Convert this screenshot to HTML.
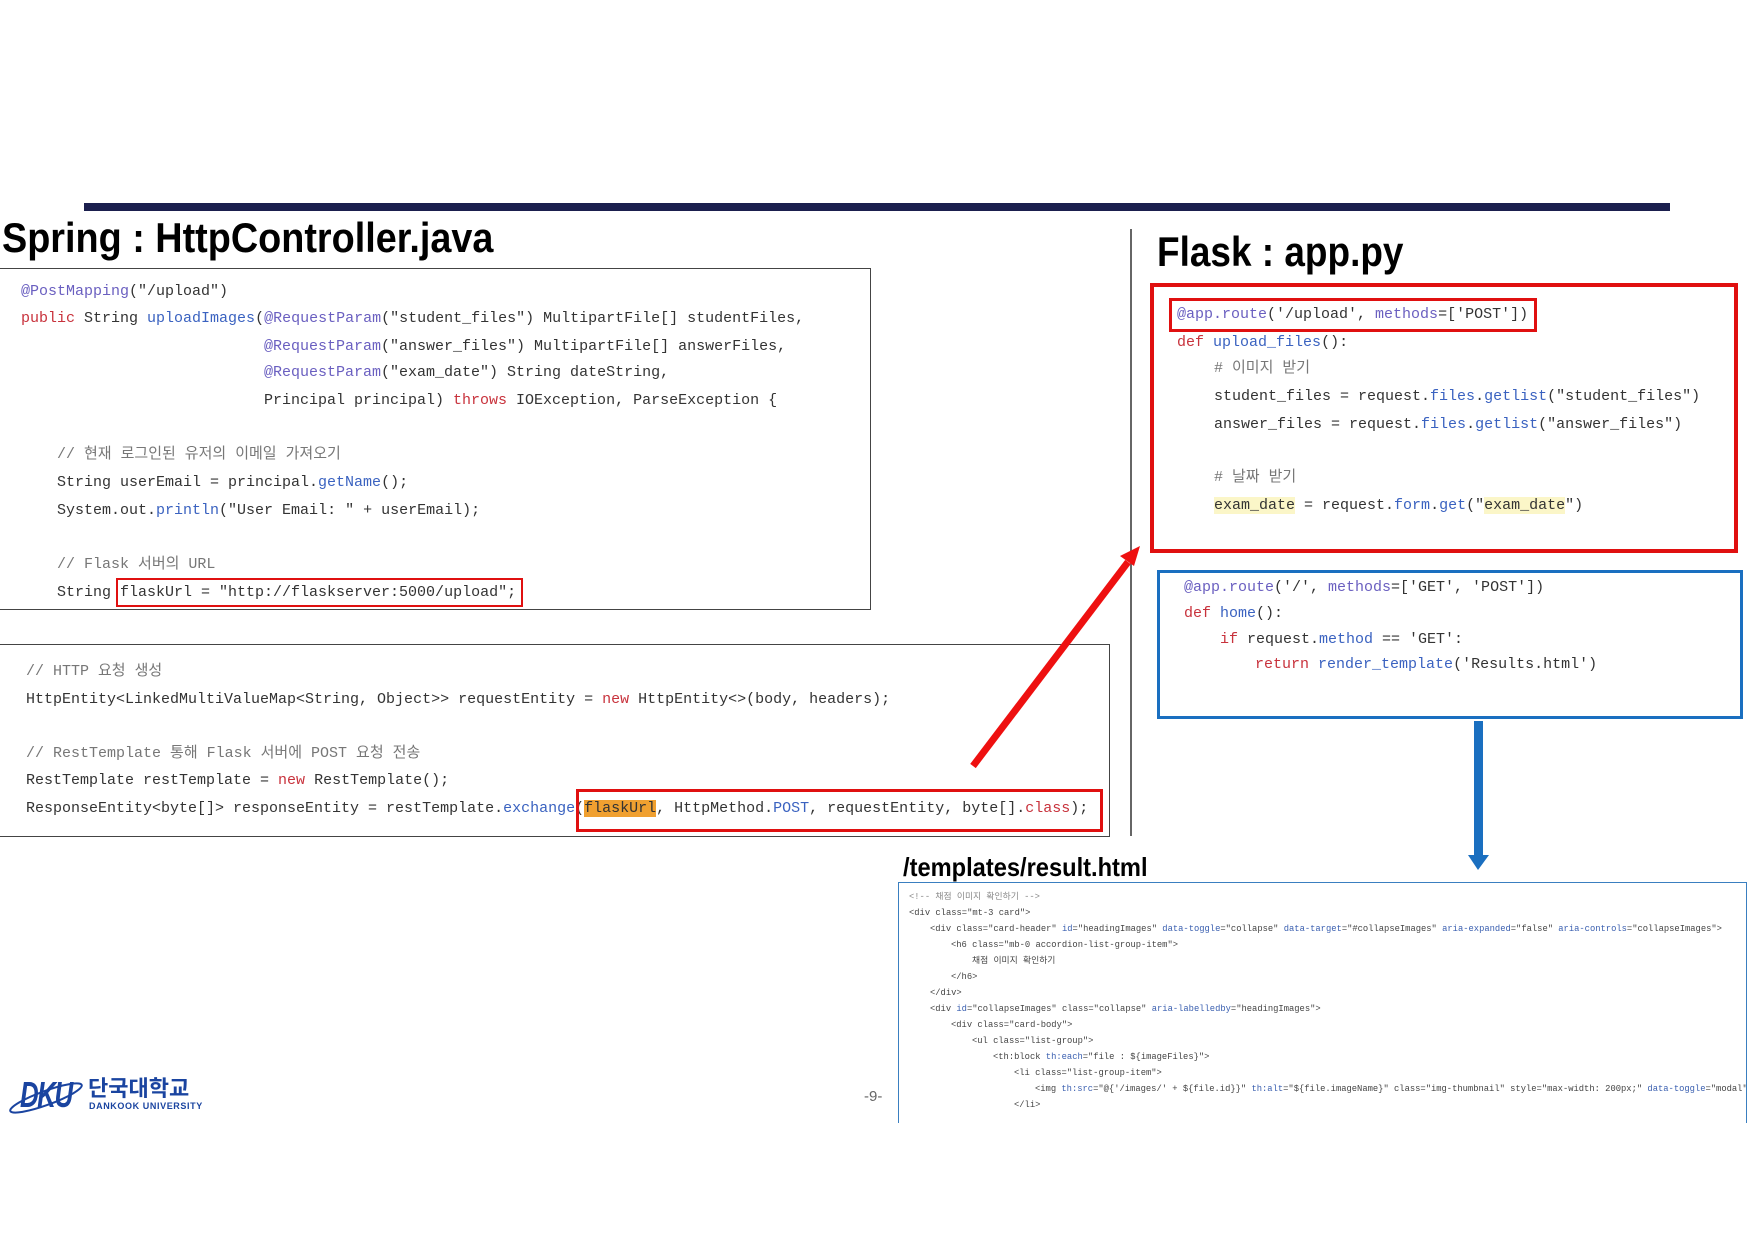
<!DOCTYPE html>
<html><head><meta charset="utf-8"><style>
body{margin:0;width:1753px;height:1240px;background:#fff;position:relative;overflow:hidden;font-family:"Liberation Sans","Noto Sans CJK KR",sans-serif}
.a{position:absolute}
.c{position:absolute;white-space:pre;font-family:"Liberation Mono","Noto Sans CJK KR",monospace;font-size:15px;color:#333;line-height:18px}
.t{position:absolute;font-family:"Liberation Sans Narrow","Liberation Sans","Noto Sans CJK KR",sans-serif;font-weight:bold;color:#000;white-space:nowrap;transform-origin:0 0}
.an{color:#6a5fc0}.kw{color:#c8323c}.fn{color:#3a62c0}.cm{color:#777}.st{color:#333}
.h .c{font-size:8.8px;line-height:12px;color:#444}
.h .tg{color:#555}.h .at{color:#3a5fb0}
</style></head><body>
<div class="a" style="left:84px;top:203px;width:1586px;height:8px;background:#1b1f4e"></div>

<div class="t" style="left:2px;top:214px;font-size:42px;transform:scaleX(0.9)">Spring : HttpController.java</div>
<div class="a" style="left:0;top:268px;width:870px;height:340px;border:1px solid #444;border-left:none"></div>
<div class="c" style="left:21px;top:283px"><span class="an">@PostMapping</span>("/upload")</div>
<div class="c" style="left:21px;top:310px"><span class="kw">public</span> String <span class="fn">uploadImages</span>(<span class="an">@RequestParam</span>("student_files") MultipartFile[] studentFiles,</div>
<div class="c" style="left:264px;top:338px"><span class="an">@RequestParam</span>("answer_files") MultipartFile[] answerFiles,</div>
<div class="c" style="left:264px;top:364px"><span class="an">@RequestParam</span>("exam_date") String dateString,</div>
<div class="c" style="left:264px;top:392px">Principal principal) <span class="kw">throws</span> IOException, ParseException {</div>
<div class="c cm" style="left:57px;top:446px">// 현재 로그인된 유저의 이메일 가져오기</div>
<div class="c" style="left:57px;top:474px">String userEmail = principal.<span class="fn">getName</span>();</div>
<div class="c" style="left:57px;top:502px">System.out.<span class="fn">println</span>("User Email: " + userEmail);</div>
<div class="c cm" style="left:57px;top:556px">// Flask 서버의 URL</div>
<div class="c" style="left:57px;top:584px">String flaskUrl = "http://flaskserver:5000/upload";</div>
<div class="a" style="left:116px;top:578px;width:403px;height:25px;border:2px solid #e01010"></div>

<div class="a" style="left:0;top:644px;width:1109px;height:191px;border:1px solid #444;border-left:none"></div>
<div class="c cm" style="left:26px;top:663px">// HTTP 요청 생성</div>
<div class="c" style="left:26px;top:691px">HttpEntity&lt;LinkedMultiValueMap&lt;String, Object&gt;&gt; requestEntity = <span class="kw">new</span> HttpEntity&lt;&gt;(body, headers);</div>
<div class="c cm" style="left:26px;top:745px">// RestTemplate 통해 Flask 서버에 POST 요청 전송</div>
<div class="c" style="left:26px;top:772px">RestTemplate restTemplate = <span class="kw">new</span> RestTemplate();</div>
<div class="c" style="left:26px;top:800px">ResponseEntity&lt;byte[]&gt; responseEntity = restTemplate.<span class="fn">exchange</span>(<span style="background:#f0a030">flaskUrl</span>, HttpMethod.<span class="fn">POST</span>, requestEntity, byte[].<span class="kw">class</span>);</div>
<div class="a" style="left:576px;top:789px;width:521px;height:37px;border:3px solid #e01010"></div>

<div class="a" style="left:1130px;top:229px;width:2px;height:607px;background:#666"></div>

<div class="t" style="left:1157px;top:228px;font-size:42px;transform:scaleX(0.88)">Flask : app.py</div>
<div class="a" style="left:1150px;top:283px;width:580px;height:262px;border:4px solid #e01010"></div>
<div class="a" style="left:1169px;top:298px;width:362px;height:28px;border:3px solid #e01010"></div>
<div class="c" style="left:1177px;top:306px"><span class="an">@app.route</span>('/upload', <span class="an">methods</span>=['POST'])</div>
<div class="c" style="left:1177px;top:334px"><span class="kw">def</span> <span class="fn">upload_files</span>():</div>
<div class="c cm" style="left:1214px;top:360px"># 이미지 받기</div>
<div class="c" style="left:1214px;top:388px">student_files = request.<span class="fn">files</span>.<span class="fn">getlist</span>("student_files")</div>
<div class="c" style="left:1214px;top:416px">answer_files = request.<span class="fn">files</span>.<span class="fn">getlist</span>("answer_files")</div>
<div class="c cm" style="left:1214px;top:469px"># 날짜 받기</div>
<div class="c" style="left:1214px;top:497px"><span style="background:#fbf6c8">exam_date</span> = request.<span class="fn">form</span>.<span class="fn">get</span>("<span style="background:#fbf6c8">exam_date</span>")</div>

<div class="a" style="left:1157px;top:570px;width:580px;height:143px;border:3px solid #1a6fc0"></div>
<div class="c" style="left:1184px;top:579px"><span class="an">@app.route</span>('/', <span class="an">methods</span>=['GET', 'POST'])</div>
<div class="c" style="left:1184px;top:605px"><span class="kw">def</span> <span class="fn">home</span>():</div>
<div class="c" style="left:1220px;top:631px"><span class="kw">if</span> request.<span class="fn">method</span> == 'GET':</div>
<div class="c" style="left:1255px;top:656px"><span class="kw">return</span> <span class="fn">render_template</span>('Results.html')</div>

<svg class="a" style="left:0;top:0" width="1753" height="1240">
<line x1="973" y1="766" x2="1128" y2="562" stroke="#ee1010" stroke-width="7"/>
<polygon points="1140,546 1120,556 1134,566" fill="#ee1010"/>
<rect x="1474" y="721" width="9" height="136" fill="#1a6fc0"/>
<polygon points="1468,855 1489,855 1478,870" fill="#1a6fc0"/>
</svg>

<div class="t" style="left:903px;top:852px;font-size:26px;transform:scaleX(0.91)">/templates/result.html</div>
<div class="a h" style="left:898px;top:882px;width:847px;height:240px;border:1px solid #3a7fc0;border-bottom:none;overflow:hidden">
<div class="c" style="left:10px;top:8px;color:#888">&lt;!-- 채점 이미지 확인하기 --&gt;</div>
<div class="c" style="left:10px;top:24px">&lt;div class="mt-3 card"&gt;</div>
<div class="c" style="left:31px;top:40px">&lt;div class="card-header" <span class="at">id</span>="headingImages" <span class="at">data-toggle</span>="collapse" <span class="at">data-target</span>="#collapseImages" <span class="at">aria-expanded</span>="false" <span class="at">aria-controls</span>="collapseImages"&gt;</div>
<div class="c" style="left:52px;top:56px">&lt;h6 class="mb-0 accordion-list-group-item"&gt;</div>
<div class="c" style="left:73px;top:72px">채점 이미지 확인하기</div>
<div class="c" style="left:52px;top:88px">&lt;/h6&gt;</div>
<div class="c" style="left:31px;top:104px">&lt;/div&gt;</div>
<div class="c" style="left:31px;top:120px">&lt;div <span class="at">id</span>="collapseImages" class="collapse" <span class="at">aria-labelledby</span>="headingImages"&gt;</div>
<div class="c" style="left:52px;top:136px">&lt;div class="card-body"&gt;</div>
<div class="c" style="left:73px;top:152px">&lt;ul class="list-group"&gt;</div>
<div class="c" style="left:94px;top:168px">&lt;th:block <span class="at">th:each</span>="file : ${imageFiles}"&gt;</div>
<div class="c" style="left:115px;top:184px">&lt;li class="list-group-item"&gt;</div>
<div class="c" style="left:136px;top:200px">&lt;img <span class="at">th:src</span>="@{'/images/' + ${file.id}}" <span class="at">th:alt</span>="${file.imageName}" class="img-thumbnail" style="max-width: 200px;" <span class="at">data-toggle</span>="modal"</div>
<div class="c" style="left:115px;top:216px">&lt;/li&gt;</div>
</div>

<div class="a" style="left:864px;top:1088px;font-size:15px;color:#666">-9-</div>

<div class="a" style="left:20px;top:1077px;font-size:36px;font-weight:bold;font-style:italic;color:#1a44a0;letter-spacing:-2px;line-height:36px;transform:scaleX(0.72);transform-origin:0 0">DKU</div>
<svg class="a" style="left:6px;top:1078px" width="80" height="40"><ellipse cx="40" cy="20" rx="38" ry="7" transform="rotate(-20 40 20)" fill="none" stroke="#1a44a0" stroke-width="2"/></svg>
<div class="a" style="left:88px;top:1074px;font-size:22px;font-weight:bold;color:#1a44a0;font-family:'Noto Sans CJK KR',sans-serif;line-height:26px">단국대학교</div>
<div class="a" style="left:89px;top:1101px;font-size:9px;font-weight:bold;color:#1a44a0;letter-spacing:0.6px">DANKOOK UNIVERSITY</div>
</body></html>
